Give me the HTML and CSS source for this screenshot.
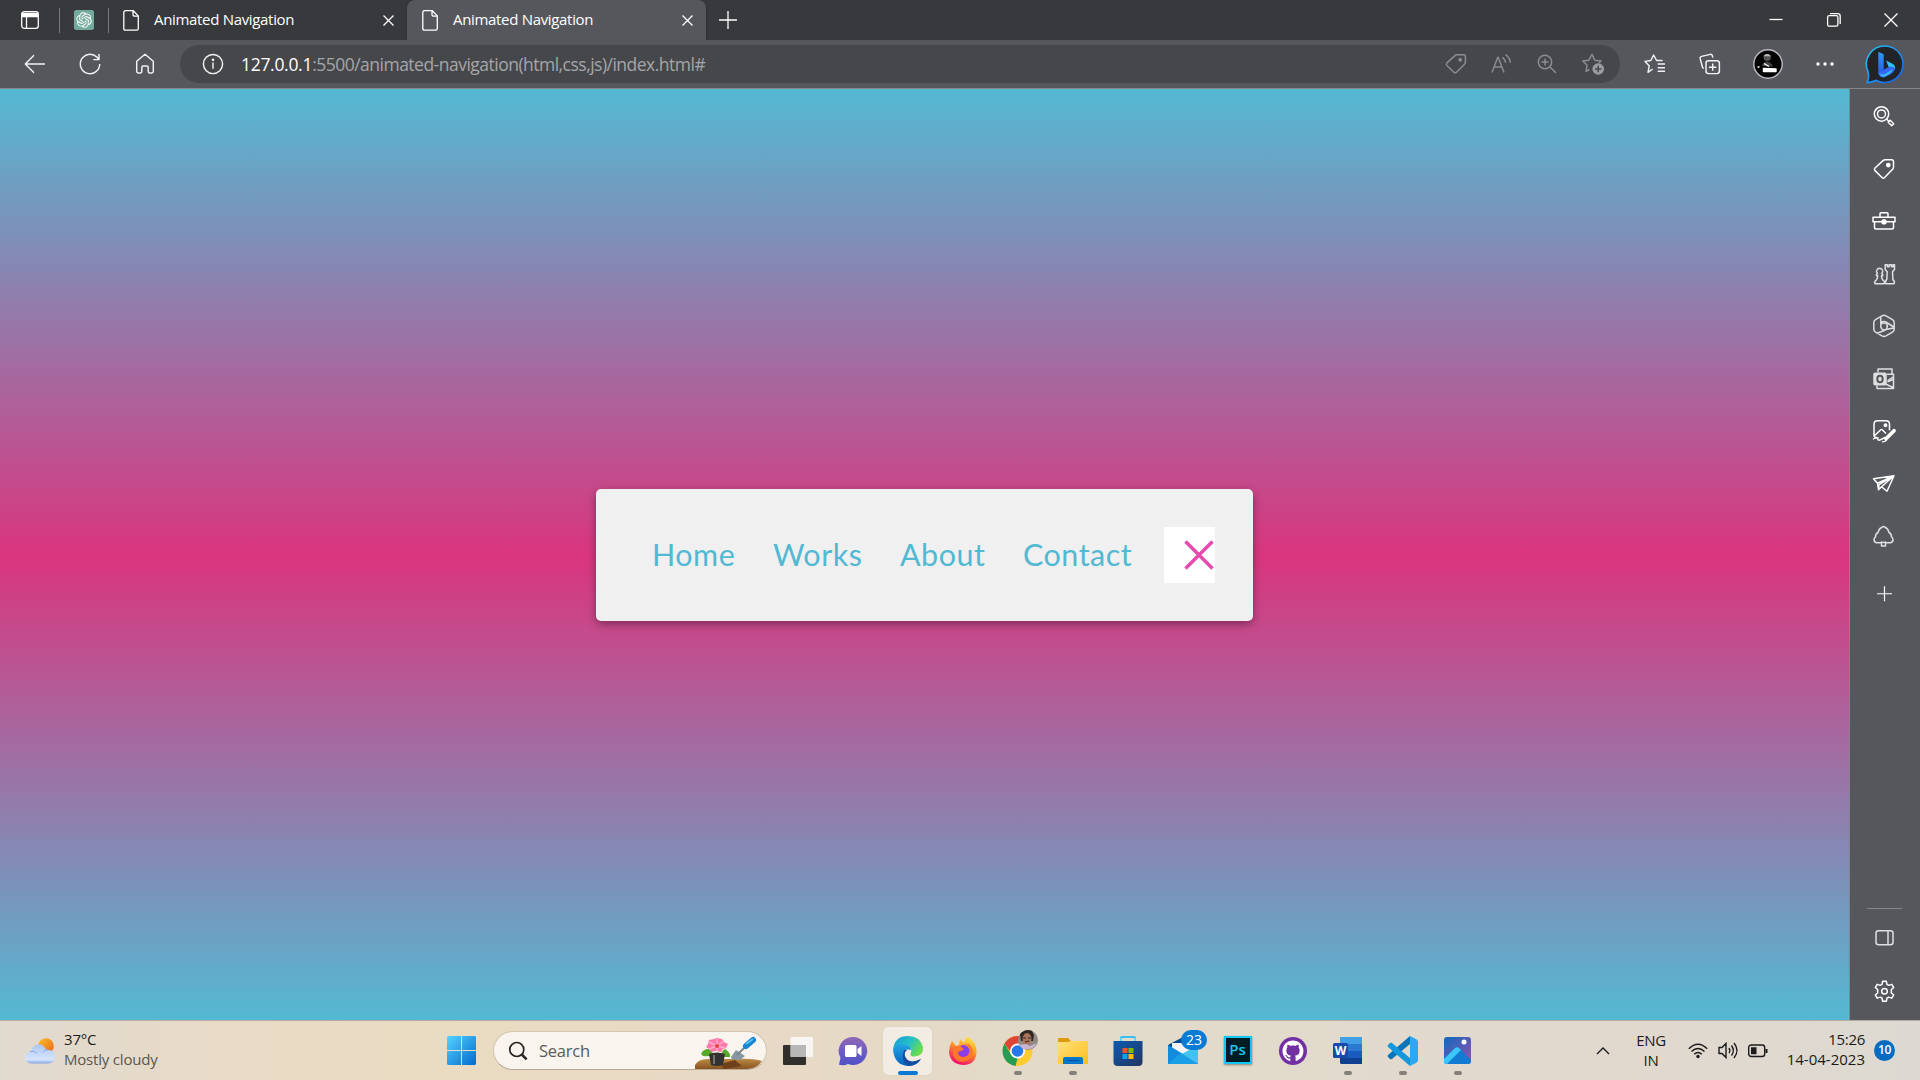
FILE: index.html
```html
<!DOCTYPE html>
<html lang="en">
<head>
<meta charset="utf-8">
<title>Animated Navigation</title>
<link rel="stylesheet" href="styles.css">
</head>
<body>
<div class="desktop">
  <header class="tabbar">
    <div class="tab-actions"><svg width="20" height="20" viewBox="0 0 20 20" fill="none" stroke="#fff" stroke-width="1.3"><rect x="1.7" y="1.7" width="16.6" height="16.6" rx="2.6"/><path d="M2 3.5h16v3H2z" fill="#fff"/><path d="M6.500 6v12"/></svg></div>
    <i class="sep"></i>
    <div class="pinned"><svg class="solid" width="20" height="20" viewBox="0 0 20 20"><rect width="20" height="20" rx="2.5" fill="#74aa9c"/><path transform="translate(2.2 2.2) scale(.65)" fill="#fff" d="M22.2819 9.8211a5.9847 5.9847 0 0 0-.5157-4.9108 6.0462 6.0462 0 0 0-6.5098-2.9A6.0651 6.0651 0 0 0 4.9807 4.1818a5.9847 5.9847 0 0 0-3.9977 2.9 6.0462 6.0462 0 0 0 .7427 7.0966 5.98 5.98 0 0 0 .511 4.9107 6.051 6.051 0 0 0 6.5146 2.9001A5.9847 5.9847 0 0 0 13.2599 24a6.0557 6.0557 0 0 0 5.7718-4.2058 5.9894 5.9894 0 0 0 3.9977-2.9001 6.0557 6.0557 0 0 0-.7475-7.073zm-9.022 12.6081a4.4755 4.4755 0 0 1-2.8764-1.0408l.1419-.0804 4.7783-2.7582a.7948.7948 0 0 0 .3927-.6813v-6.7369l2.02 1.1686a.071.071 0 0 1 .038.052v5.5826a4.504 4.504 0 0 1-4.4945 4.4944zm-9.6607-4.1254a4.4708 4.4708 0 0 1-.5346-3.0137l.142.0852 4.783 2.7582a.7712.7712 0 0 0 .7806 0l5.8428-3.3685v2.3324a.0804.0804 0 0 1-.0332.0615L9.74 19.9502a4.4992 4.4992 0 0 1-6.1408-1.6464zM2.3408 7.8956a4.485 4.485 0 0 1 2.3655-1.9728V11.6a.7664.7664 0 0 0 .3879.6765l5.8144 3.3543-2.0201 1.1685a.0757.0757 0 0 1-.071 0l-4.8303-2.7865A4.504 4.504 0 0 1 2.3408 7.872zm16.5963 3.8558L13.1038 8.364 15.1192 7.2a.0757.0757 0 0 1 .071 0l4.8303 2.7913a4.4944 4.4944 0 0 1-.6765 8.1042v-5.6772a.79.79 0 0 0-.407-.667zm2.0107-3.0231l-.142-.0852-4.7735-2.7818a.7759.7759 0 0 0-.7854 0L9.409 9.2297V6.8974a.0662.0662 0 0 1 .0284-.0615l4.8303-2.7866a4.4992 4.4992 0 0 1 6.6802 4.66zM8.3065 12.863l-2.02-1.1638a.0804.0804 0 0 1-.038-.0567V6.0742a4.4992 4.4992 0 0 1 7.3757-3.4537l-.142.0805L8.704 5.459a.7948.7948 0 0 0-.3927.6813zm1.0976-2.3654l2.602-1.4998 2.6069 1.4998v2.9994l-2.5974 1.4997-2.6067-1.4997Z"/></svg></div>
    <i class="sep"></i>
    <div class="tab first"><svg class="doc" width="16" height="21" viewBox="0 0 16 21"><path d="M2.5.7h7.8l5 5.2v12.6q0 1.7-1.7 1.7H2.5Q.8 20.2.8 18.5v-16Q.8.7 2.5.7zM10 1v3.4q0 1.8 1.8 1.8h3.4"/></svg><span>Animated Navigation</span><svg class="x" width="11" height="11" viewBox="0 0 11 11"><path d="M.5.5l10 10M10.5.5l-10 10"/></svg></div>
    <div class="tab active"><svg class="doc" width="16" height="21" viewBox="0 0 16 21"><path d="M2.5.7h7.8l5 5.2v12.6q0 1.7-1.7 1.7H2.5Q.8 20.2.8 18.5v-16Q.8.7 2.5.7zM10 1v3.4q0 1.8 1.8 1.8h3.4"/></svg><span>Animated Navigation</span><svg class="x" width="11" height="11" viewBox="0 0 11 11"><path d="M.5.5l10 10M10.5.5l-10 10"/></svg></div>
    <svg class="newtab" width="18" height="18" viewBox="0 0 18 18"><path d="M9 0v18M0 9h18"/></svg>
    <div class="window-buttons">
      <svg width="14" height="14" viewBox="0 0 14 14"><path d="M.5 6.500h13"/></svg>
      <svg width="14" height="14" viewBox="0 0 14 14"><rect x=".6" y="2.6" width="10.3" height="10.6" rx="1.6"/><path d="M3 .6h7.6q2.6 0 2.6 2.6V11"/></svg>
      <svg width="14" height="14" viewBox="0 0 14 14"><path d="M.5.5l13 13M13.5.5l-13 13"/></svg>
    </div>
  </header>

  <div class="toolbar">
    <div class="nav-cell"><svg width="22" height="20" viewBox="0 0 22 20"><path d="M21 10H1.5M10 1.2L1.3 10l8.7 8.8"/></svg></div>
    <div class="nav-cell"><svg width="22" height="22" viewBox="0 0 22 22"><path d="M20.7 11A9.7 9.7 0 1 1 17.8 4.1L19.7 6.2M20 1v5.6h-5.7"/></svg></div>
    <div class="nav-cell"><svg width="20" height="21" viewBox="0 0 20 21"><path d="M1.7 8.2L10 1.3l8.3 6.900v10q0 1.700-1.600 1.700h-2.200q-1.300 0-1.300-1.300v-4.300q0-1.400-1.400-1.400H8.200q-1.400 0-1.400 1.400v4.300q0 1.300-1.300 1.300H3.300q-1.600 0-1.600-1.700z"/></svg></div>
    <div class="address">
      <svg class="info" width="22" height="22" viewBox="0 0 22 22"><circle cx="11" cy="11" r="9.600"/><path d="M11 9.500v6.200"/><circle cx="11" cy="6.800" r=".6" fill="#fff"/></svg>
      <p class="url"><b>127.0.0.1</b>:5500/animated-navigation(html,css,js)/index.html#</p>
      <div class="address-icons">
        <svg width="22" height="22" viewBox="0 0 22 22"><path d="M12.2 1.7h6.5q1.7 0 1.7 1.7V9q0 1.3-.9 2.2l-8 8q-1.3 1.3-2.6 0l-7-6.7q-1.2-1.3 0-2.6L10 2.6q1-.9 2.2-.9z"/><circle cx="15.2" cy="6.8" r="1.2" fill="#8c8d90"/></svg>
        <svg width="22" height="22" viewBox="0 0 22 22"><path d="M2 19.500L7.800 4.200h.4L14 19.500M4.200 14h7.600M12.300 4.300q3 1.800 3.300 5.500M15.500 1.700q4.500 3 4.800 8"/></svg>
        <svg width="22" height="22" viewBox="0 0 22 22"><circle cx="9" cy="9" r="6.700"/><path d="M14 14l6 6M9 5.500v7M5.500 9h7"/></svg>
        <svg width="24" height="24" viewBox="0 0 24 24"><path d="M8.500 17.500L5 19.300l1.100-6L1.800 9l6-.8L11 2.400l2.800 5.800 6.300.8-2.100 2.100"/><circle cx="17.200" cy="17" r="5.800" fill="#9b9c9f" stroke="none"/><path d="M14 17h6.400M17.200 13.800v6.400" stroke="#46474b"/></svg>
      </div>
    </div>
    <div class="browser-actions">
      <svg width="22" height="22" viewBox="0 0 22 22"><path d="M8.600 16L4 19.300l1.200-6.500L1 8.400l5.800-.9L9.600 2l3 5.500h6M13.700 11H21M13.700 14.700H21M13.700 18.300H21"/></svg>
      <svg width="22" height="22" viewBox="0 0 22 22"><rect x="7" y="7.800" width="13.400" height="12.800" rx="2.500"/><path d="M13.700 10.600v7.200M10 14.200h7.300M4.800 15.300q-1.200-.1-1.400-1.500L1.200 5.700q-.4-1.900 1.400-2.300l8.600-2q1.600-.3 2.100 1.200l.5 2"/></svg>
      <svg width="30" height="30" viewBox="0 0 30 30"><circle cx="15" cy="15" r="14.200" fill="#030303" stroke="#bbb"/><circle cx="14.200" cy="8.500" r="3.600" fill="#555" stroke="none"/><path d="M10.300 7.200q3.900-4.500 7.800 0z" fill="#bbb" stroke="none"/><path d="M9 17q1-4 5-4.500 4 .5 6 5z" fill="#444" stroke="none"/><path d="M11 14.500l5 3M4.500 18h2M10.500 19.500l12.500.5v2.500H10.500z" fill="#fff" stroke="#fff"/></svg>
      <svg width="20" height="6" viewBox="0 0 20 6"><g fill="#fff" stroke="none"><circle cx="3" cy="3" r="1.700"/><circle cx="10" cy="3" r="1.700"/><circle cx="17" cy="3" r="1.700"/></g></svg>
      <svg width="40" height="40" viewBox="0 0 40 40"><defs><linearGradient id="bingRing" x1="0" y1="0" x2="1" y2="1"><stop offset="0" stop-color="#22c7f4"/><stop offset="1" stop-color="#155be9"/></linearGradient><linearGradient id="bingB" x1="0" y1="0" x2="0" y2="1"><stop stop-color="#2d9df6"/><stop offset="1" stop-color="#2458e8"/></linearGradient></defs><path d="M20 2a18.200 18.200 0 1 1-8.500 34.400Q6 38.700 2 38.600q2.400-5 1-10.900A18.200 18.200 0 0 1 20 2z" fill="#222327" stroke="url(#bingRing)" stroke-width="1.700"/><path d="M13.300 7.800l5.400 2.400v15.500l-5.400 4.800z" fill="url(#bingB)" stroke="none"/><path d="M21 16.500l6.500 3.200q4 2.500 1.700 6.500l-5.500-3.200z" fill="#30c1f4" stroke="none"/><path d="M13.300 29l5.400-3.300 5-2.700q5-1 6 1.500-.5 4-5.500 6.500l-5 2.500q-4.500.500-5.900-4.500z" fill="#3268f3" stroke="none"/><path d="M14 30l5 .5 9-5.500q-1 3.500-4.500 5.500l-4.500 2.500q-3 0-5-3z" fill="#38b6f5" stroke="none"/></svg>
    </div>
  </div>

  <div class="workspace">
    <main class="page">
      <nav class="card">
        <ul>
          <li class="home">Home</li><li class="works">Works</li><li class="about">About</li><li class="contact">Contact</li>
        </ul>
        <button class="toggle" aria-label="Toggle menu"><svg width="32" height="32" viewBox="0 0 32 32"><path d="M2.500 2.500l27 27M29.500 2.500l-27 27"/></svg></button>
      </nav>
    </main>
    <aside class="sidebar">
      <svg width="24" height="24" viewBox="0 0 24 24"><circle cx="9.500" cy="9.700" r="7.200"/><circle cx="9.500" cy="9.700" r="4"/><path d="M14.500 14.700l2.500 2.500M16.200 18l2-2 3.500 3.500-2 2z"/></svg>
      <svg width="24" height="24" viewBox="0 0 24 24"><path d="M13.300 2.500h6.400q1.800 0 1.800 1.800v5.500q0 1.300-.9 2.200l-8 8.300q-1.300 1.300-2.600 0l-7-6.900q-1.200-1.300 0-2.600l8-7.400q1-.9 2.300-.9z"/><circle cx="16.300" cy="7.800" r="1.600" fill="#fff"/></svg>
      <svg width="24" height="24" viewBox="0 0 24 24"><path d="M1 8h22v4.500H1zM2.500 12.500v6q0 1.200 1.200 1.200h16.600q1.200 0 1.200-1.200v-6M8 7.500V4.600q0-1 1-1h6q1 0 1 1v2.900"/><rect x="10.200" y="10.800" width="3.600" height="3.800" rx="1" fill="#fff"/></svg>
      <svg class="dim" width="24" height="24" viewBox="0 0 24 24"><path d="M3 21.500q-1.200-2.300 1.700-4.200 1-1.400 1-3.700H4.500v-1.500l1-.8Q3.800 9.600 4.700 8q1-1.900 2.900-1.900t2.900 1.900q.9 1.600-.8 3.300l1 .8v1.500H9.500q0 2.300 1 3.700 2.900 1.900 1.700 4.200zM13.800 21.500q-1-2.400 1-4.200l.4-7.800-2-2.200V2.600h2.200v2h1.700v-2h2.300v2H21v-2h1.500v4.700l-2 2.200.4 7.800q2.200 1.800 1.200 4.200z"/></svg>
      <svg class="dim" width="24" height="24" viewBox="0 0 24 24"><path d="M10 1.600q2-1.200 4 0l6.500 3.800q1.700 1.100 1.700 3v6.500q0 2-1.700 3L14 21.700q-2 1.100-4 0l-6.500-3.800q-1.700-1-1.700-3V8.400q0-2 1.700-3zM8.800 3v9.300q.3 3 3 3.500l9.700-2M9 8.500q2.500-2 5.300-.5l7 4.500M15.200 10.500q.7 3.500-2.200 5.500l-8 3"/><path d="M9 9.500q4-2 6.300 1"/></svg>
      <svg class="dim" width="24" height="24" viewBox="0 0 24 24"><path d="M6 5V1.800h14v6M15 7h6.500v14.200H5v-3M15.500 13.500l6-4M13 16.500l8.500 4M21.500 12l-6 2.500"/><rect x="2" y="6" width="12" height="11.500" rx="1" fill="#dedfe0"/><ellipse cx="8" cy="11.700" rx="2.700" ry="3.200" stroke="#54565b" stroke-width="2"/></svg>
      <svg width="26" height="26" viewBox="0 0 26 26"><path d="M6 19.500q-3 0-3-3V6q0-3.500 3.500-3.500H15q3.500 0 3.500 3.500v6M4 17l5.500-5.300q1-.8 2 0l3.500 3.500"/><circle cx="14.500" cy="7" r="1.200" fill="#fff"/><path d="M23 12.500l-8 8" stroke-width="3.800" stroke-linecap="round"/><path d="M2 21q3-2 5-1.200-1 3 2.500 1.700l3-1.500q2-1.500 3 .5.300 3-4.500 3"/></svg>
      <svg width="24" height="24" viewBox="0 0 24 24"><path d="M1.500 6.500l20.500-3-7 15.500-5.500-4.500-3 3-1-6.500zM5.500 11L22 3.500 9.500 14.500M6.500 17.500L7 12.300 22 3.500"/></svg>
      <svg class="dim" width="24" height="24" viewBox="0 0 24 24"><path d="M9.500 18.500H5q-3-.2-3-3 0-1.700 1.500-2.800Q3.400 9.500 6.200 8q.5-3.600 3.500-4.700Q11.500 1 13.300 3.300q3 1.100 3.500 4.700 2.800 1.500 2.700 4.700Q21 13.800 21 15.500q0 2.800-3 3h-4.500M9.500 17.700v4h4v-4q-2 1.300-4 0z"/></svg>
      <svg class="add" width="24" height="24" viewBox="0 0 24 24"><path d="M12.500 5v15M5 12.500h15"/></svg>
      <hr>
      <svg class="panel dim" width="24" height="24" viewBox="0 0 24 24"><rect x="4" y="4.500" width="17" height="14" rx="2.500"/><path d="M16 4.500v14"/></svg>
      <svg width="24" height="24" viewBox="0 0 24 24"><circle cx="12.500" cy="12" r="2.800"/><path transform="translate(.5 0)" d="M10.200 2h3.600l.7 3.200q1 .3 1.700.9l3.100-1 1.900 3.200-2.500 2.200q.4 1.500 0 3l2.500 2.200-1.900 3.200-3.100-1q-.7.6-1.700.9l-.7 3.200h-3.600l-.7-3.200q-1-.3-1.700-.9l-3.100 1-1.900-3.200 2.500-2.200q-.4-1.500 0-3L2.800 8.300l1.900-3.200 3.100 1q.7-.6 1.700-.9z"/></svg>
    </aside>
  </div>

  <footer class="taskbar">
    <div class="weather">
      <svg width="30" height="26" viewBox="0 0 30 26"><defs><linearGradient id="sun" x1="0" y1="0" x2="1" y2="1"><stop stop-color="#f8bf29"/><stop offset="1" stop-color="#ee6418"/></linearGradient><linearGradient id="cloud" x1="0" y1="0" x2="0" y2="1"><stop stop-color="#aac6f5"/><stop offset=".8" stop-color="#d7e5fb"/><stop offset="1" stop-color="#86a6e5"/></linearGradient></defs><circle cx="21" cy="8" r="7.800" fill="url(#sun)"/><path d="M6 25.500a6 6 0 0 1 0-12Q8 6.500 14 6.500q5 0 7 5.200 8-.7 9 6.300-.3 7.500-7 7.500z" fill="url(#cloud)"/><path d="M5 13.500q5-1 7 2M18 14.500q1-3 5-2.800" fill="none" stroke="#8ba9e6"/></svg>
      <p><span>37°C</span><br><span class="sky">Mostly cloudy</span></p>
    </div>
    <div class="dock">
      <div class="app start"><svg width="29" height="29" viewBox="0 0 29 29"><defs><linearGradient id="win" x1="0" y1="0" x2="1" y2="1"><stop stop-color="#55d4ff"/><stop offset="1" stop-color="#0069cf"/></linearGradient></defs><path d="M1 0h13v14H0V1zM15 0h13l1 1v13H15zM0 15h14v14H1l-1-1zM15 15h14v13l-1 1H15z" fill="url(#win)"/></svg></div>
      <div class="search">
        <svg width="20" height="20" viewBox="0 0 20 20" fill="none" stroke="#252525"><circle cx="8.800" cy="8.500" r="7" stroke-width="1.700"/><path d="M13.800 13.500l4.800 4.800" stroke-width="2.500"/></svg>
        <span>Search</span>
        <svg class="art" width="68" height="32" viewBox="0 0 68 32"><defs><linearGradient id="soil" x1="0" y1="0" x2="0" y2="1"><stop stop-color="#bd8b46"/><stop offset="1" stop-color="#875321"/></linearGradient></defs><path d="M0 32v-4q3-6 13-6h28q16-1 26 2-4 6-11 8z" fill="url(#soil)"/><path d="M26 27l14-4 7 6-18 3z" fill="#6f411b"/><path d="M14 19q-10 1-7-4 4-5 9-2l4 7zM26 20q0-6 4-8 6 4 5 8z" fill="#56aa28"/><path d="M14 17q8-3 16 0l-2 11q-6 2-12 0z" fill="#343332"/><path d="M19 18v9" stroke="#77736f" stroke-width="2"/><path d="M22 1l5 1 2 3 4 2-2 4-3 1-2 3-5-1-5 1-2-3-3-2 2-3 1-4 5-1z" fill="#ff79aa"/><path d="M14 5l8 4 7-5M14 12l8-3 8 2M22 2v12" stroke="#ffacd0" stroke-width="1.500" fill="none"/><circle cx="22" cy="9" r="2" fill="#e8423c"/><path d="M36 20l5-7 9 6-5 4-8-.500z" fill="#8798a4"/><path d="M42 18l8-8" stroke="#78858d" stroke-width="2"/><path d="M51 9l7-6" stroke="#1686d2" stroke-width="6" stroke-linecap="round"/><path d="M51 7l7-5" stroke="#56c0f4" stroke-width="2"/></svg>
      </div>
      <div class="app"><svg width="30" height="28" viewBox="0 0 30 28"><rect y="8" width="23" height="20" rx="1" fill="#302f2c"/><rect x="7.500" width="22.500" height="20" rx="1" fill="#fafafa" opacity=".86"/><path d="M7.500 8H23v12H7.500z" fill="#aaa" opacity=".75"/></svg></div>
      <div class="app"><svg width="30" height="30" viewBox="0 0 30 30"><defs><linearGradient id="chat" x1="0" y1="0" x2="0" y2="1"><stop stop-color="#8f69b8"/><stop offset="1" stop-color="#4e50c8"/></linearGradient></defs><path d="M15 1a14 14 0 1 1-5 27q-4 2-9 .8l1.500-7A14 14 0 0 1 15 1z" fill="url(#chat)"/><rect x="7" y="9" width="11.500" height="12" rx="1.500" fill="#fff"/><path d="M19.500 13l4-3v10l-4-3z" fill="#fff"/></svg></div>
      <div class="app current"><svg width="30" height="30" viewBox="0 0 30 30"><defs><linearGradient id="edgeTop" x1="0" y1="0" x2="1" y2=".5"><stop stop-color="#169ad7"/><stop offset=".55" stop-color="#24bfc6"/><stop offset="1" stop-color="#69dc50"/></linearGradient><linearGradient id="edgeLow" x1="0" y1="0" x2="0" y2="1"><stop stop-color="#23a8e4"/><stop offset="1" stop-color="#075fbd"/></linearGradient></defs><path d="M0 13Q2 0 15 0q12 0 15 11 1 9-9 9.500-5-.3-3-3.500 2-6-6-8Q5 8 0 13z" fill="url(#edgeTop)"/><path d="M0 13Q4 7 10 8q8 1 8 6-6-2-7 4 0 7 9 8 4 0 7.800-3Q24 30 15 30 1 29 0 13z" fill="url(#edgeLow)"/><path d="M11 14q-4 11 4 16 9 0 13-7-13 6-16-3-1-4 2-6z" fill="#144da2"/></svg></div>
      <div class="app"><svg width="30" height="30" viewBox="0 0 30 30"><defs><linearGradient id="fox" x1=".8" y1="0" x2=".4" y2="1"><stop stop-color="#fff04a"/><stop offset=".45" stop-color="#ff9825"/><stop offset="1" stop-color="#f10b6c"/></linearGradient></defs><path d="M4 5l4 5 3-1 1-6 4 4 3-7q9 6 9.500 14Q29 29 15 29 2 28 1 16q0-6 3-11z" fill="url(#fox)"/><circle cx="15.500" cy="15" r="6" fill="#8b3ee7"/><path d="M5 11l7-1 4 3-3 2-3 1q0 6 6 5 6-1 6-7-2-6-7-6 8-2 10 7-1 11-11 11-7-1-9-7z" fill="#ff792c"/></svg></div>
      <div class="app running"><svg class="chrome" width="37" height="37" viewBox="0 0 37 37"><circle cx="15.500" cy="22" r="15" fill="#ffcb31"/><path d="M2.500 14.500A15 15 0 0 1 28.500 14.500H15.500L10 25z" fill="#df4537"/><path d="M2.500 14.500L9 25.500l6.500 4-2 7.400A15 15 0 0 1 2.500 14.500z" fill="#259b54"/><circle cx="15.500" cy="22" r="7.500" fill="#fff"/><circle cx="15.500" cy="22" r="5.800" fill="#2877e8"/><circle cx="26" cy="11" r="10" fill="#8f8a84"/><path d="M18 5q6-6 12-3l2 4-1 6H19z" fill="#302722"/><ellipse cx="25" cy="10" rx="4.500" ry="6" fill="#a9745b"/><path d="M17 16l7-1 4 2 7-3q-5 9-15 5z" fill="#c9b4d2"/><path d="M21 9h3M26 9h3M23 13l4-1" stroke="#322522"/></svg></div>
      <div class="app running"><svg width="30" height="27" viewBox="0 0 30 27"><defs><linearGradient id="folder" x1="0" y1="0" x2="1" y2="1"><stop stop-color="#ffe079"/><stop offset="1" stop-color="#ffbf20"/></linearGradient></defs><path d="M0 6V2q0-1 1-1h9l3 3h15q2 0 2 2z" fill="#dd9b0c"/><path d="M0 5h10l3-1h17v23H0z" fill="url(#folder)"/><path d="M5 27v-5q0-2 2-2h16q2 0 2 2v5z" fill="#0876cc"/><path d="M9 23.500h12" stroke="#034fa0"/></svg></div>
      <div class="app"><svg width="30" height="30" viewBox="0 0 30 30"><defs><linearGradient id="store" x1="0" y1="0" x2="1" y2="1"><stop stop-color="#0b5cb2"/><stop offset="1" stop-color="#243561"/></linearGradient></defs><path d="M8 9V2q0-1 1-1h12q1 0 1 1v7" fill="none" stroke="#38bef0" stroke-width="2"/><path d="M.5 5h29v21q0 4-4 4h-21q-4 0-4-4z" fill="url(#store)"/><path d="M9.500 12H14.500v5h-5z" fill="#f35325"/><path d="M15.500 12h5v5h-5z" fill="#81bc06"/><path d="M9.500 18h5v5h-5z" fill="#05a6f0"/><path d="M15.500 18h5v5h-5z" fill="#ffba08"/><path d="M8 5V2M22 5V2" stroke="#58d7ff" stroke-width="2"/></svg></div>
      <div class="app mail"><svg width="30" height="27" viewBox="0 0 30 27"><path d="M0 8L15 0l15 8v19H0z" fill="#084d94"/><path d="M4 6h22v13H4z" fill="#f4f5f6"/><path d="M0 8l30 18v1H0z" fill="#128cdd"/><path d="M30 8L13 17.500 30 27z" fill="#41c2ef"/><path d="M0 27h30L13 16z" fill="#1a9fe5"/></svg><span class="count">23</span></div>
      <div class="app"><div class="ps">Ps</div></div>
      <div class="app"><svg width="30" height="30" viewBox="0 0 30 30"><circle cx="15" cy="15" r="14" fill="#7330a2"/><path transform="translate(4.500 4.500) scale(1.310)" fill="#fff" d="M8 0C3.580 0 0 3.580 0 8c0 3.540 2.290 6.530 5.470 7.590.4.07.55-.17.55-.38 0-.19-.01-.82-.01-1.490-2.010.37-2.530-.49-2.690-.94-.09-.23-.48-.94-.82-1.130-.28-.15-.68-.52-.01-.53.63-.01 1.080.58 1.230.82.72 1.210 1.870.87 2.330.66.07-.52.28-.87.51-1.070-1.780-.2-3.640-.89-3.640-3.950 0-.87.31-1.590.82-2.150-.08-.2-.36-1.020.08-2.120 0 0 .67-.21 2.200.82.64-.18 1.320-.27 2-.27s1.360.09 2 .27c1.530-1.040 2.200-.82 2.200-.82.44 1.100.16 1.920.08 2.120.51.56.82 1.270.82 2.150 0 3.070-1.870 3.750-3.650 3.950.29.25.54.73.54 1.480 0 1.070-.01 1.930-.01 2.200 0 .21.15.46.55.38A8.010 8.010 0 0 0 16 8c0-4.420-3.580-8-8-8z"/></svg></div>
      <div class="app running word"><svg width="30" height="29" viewBox="0 0 30 29"><path d="M7 1h22v7H7z" fill="#419fe5"/><path d="M7 8h22v7H7z" fill="#2c79d2"/><path d="M7 15h22v7H7z" fill="#185abd"/><path d="M7 22h22v6H8l-1-1z" fill="#103f91"/><rect y="7" width="15" height="15" rx="1.500" fill="#164aaa"/></svg><b>W</b></div>
      <div class="app running"><svg width="30" height="30" viewBox="0 0 30 30"><path d="M22 0v8L4 23q-1 .7-2 0l-2-2q-.8-1 0-2z" fill="#0875b9"/><path d="M0 9l2-2q1-1 2 0l18 15v8L0 11q-.8-1 0-2z" fill="#1597dc"/><path d="M22 0l6 3q2 1 2 3v18q0 2-2 3l-6 3V0z" fill="#2ba9f2"/></svg></div>
      <div class="app running"><svg width="27" height="27" viewBox="0 0 27 27"><defs><linearGradient id="photo" x1="0" y1="0" x2="1" y2="1"><stop stop-color="#1168bd"/><stop offset="1" stop-color="#9652ad"/></linearGradient></defs><rect width="27" height="27" rx="3" fill="url(#photo)"/><path d="M0 22l11-11q2-1.500 4 0l12 12v1q0 3-3 3H3q-3 0-3-3z" fill="#117bd1"/><path d="M0 22l11-11q2-1.500 4 0l2 2L3 27q-3 0-3-3z" fill="#3cc6f8"/><circle cx="20" cy="5" r="2.500" fill="#fff"/></svg></div>
    </div>
    <div class="tray">
      <svg class="chevron" width="14" height="8" viewBox="0 0 14 8"><path d="M1 7l6-6 6 6"/></svg>
      <p class="lang">ENG<br>IN</p>
      <div class="status">
        <svg width="20" height="16" viewBox="0 0 20 16"><path d="M.8 5.800q9.200-9.200 18.400 0M3.500 8.500q6.500-6.200 13 0M6.200 11.200q3.800-3.600 7.600 0"/><circle cx="10" cy="13.500" r="1.700" fill="#1b1b1b" stroke="none"/></svg>
        <svg width="20" height="17" viewBox="0 0 20 17"><path d="M1 5.500h3l4-4v14l-4-4H1zM11 6q1.700 2.500 0 5M13.500 3.500q3.700 5 0 10M16 1q6 7.500 0 15"/></svg>
        <svg width="20" height="14" viewBox="0 0 20 14"><rect x=".7" y="1" width="16" height="11.500" rx="2.500"/><path d="M3 3.300h5.500v7H3zM17.500 5h2v4h-2z" fill="#1b1b1b" stroke="none"/></svg>
      </div>
      <p class="clock"><span class="time">15:26</span><br>14-04-2023</p>
      <span class="notice">10</span>
    </div>
  </footer>
</div>
</body>
</html>
```
FILE: styles.css
```css
* { box-sizing: border-box; }
body { margin: 0; overflow: hidden; font-family: "Open Sans", "Noto Sans", sans-serif; }
p, ul { margin: 0; padding: 0; list-style: none; }
svg { display: block; flex: none; overflow: visible; }
.desktop { display: flex; flex-direction: column; width: 1920px; height: 1080px; }

.tabbar { display: flex; align-items: center; height: 40px; flex: none; background: #38393d; color: #fff; }
.tabbar > svg, .tabbar .x, .tabbar .doc, .window-buttons svg { fill: none; stroke: #fff; stroke-width: 1.3; }
.tab-actions { width: 59px; padding-left: 20px; }
.sep { width: 1px; height: 25px; background: #77787b; }
.pinned { width: 48px; padding-left: 14px; }
.tab { display: flex; align-items: center; height: 40px; font-size: 15px; letter-spacing: -.32px; }
.tab span { margin-left: 15px; padding-bottom: 2px; white-space: nowrap; }
.tab .x { margin-left: auto; }
.tab.first { width: 298px; padding: 0 13px 0 14px; }
.tab.active { width: 299px; padding: 0 13px 0 15px; background: #56575c; border-radius: 8px 8px 0 0; box-shadow: 0 0 3px #2a2b2e; clip-path: inset(0 -3px 0 -3px); }
.newtab { margin-left: 13px; }
.window-buttons { display: flex; gap: 43.5px; margin-left: auto; padding-right: 22px; }

.toolbar { display: flex; align-items: center; height: 49px; flex: none; padding-left: 7px; background: #56575c; border-bottom: 1px solid #85868a; }
.toolbar svg { fill: none; stroke: #f2f2f3; stroke-width: 1.45; stroke-linejoin: round; }
.nav-cell { display: flex; justify-content: center; width: 55px; padding-bottom: 1px; }
.address { display: flex; align-items: center; width: 1440px; height: 38px; margin-left: 8px; padding-left: 22px; border-radius: 19px; background: #46474b; }
.url { margin-left: 17px; padding-bottom: 1px; color: #a5a6a9; font-size: 17.5px; letter-spacing: -.51px; white-space: nowrap; }
.url b { color: #fff; font-weight: 400; letter-spacing: -.3px; }
.address-icons { display: flex; align-items: center; gap: 23.5px; margin-left: auto; padding-right: 15px; }
.address-icons svg { stroke: #8c8d90; }
.browser-actions { display: flex; align-items: center; width: 300px; padding-left: 24px; }
.browser-actions svg:nth-child(2) { margin-left: 33px; }
.browser-actions svg:nth-child(3) { margin-left: 32px; }
.browser-actions svg:nth-child(4) { margin-left: 32px; }
.browser-actions svg:nth-child(5) { margin-left: 30px; }

.workspace { display: flex; height: 931px; }
.page { display: flex; align-items: center; justify-content: center; width: 1849px; background: linear-gradient(#54b9d3, #da357e 50.2%, #54b9d3); }
.card { display: flex; align-items: center; width: 657px; height: 132px; padding-left: 56px; border-radius: 5px; background: #f0f0f0; box-shadow: 0 3px 8px rgba(0,0,0,.38); }
.card ul { display: flex; width: 512px; padding-bottom: 1px; color: #52b9d3; font: 30.5px/40px Lato, sans-serif; letter-spacing: .5px; }
.home { width: 121px; }
.works { width: 127px; }
.about { width: 123px; }
.toggle { display: flex; align-items: center; justify-content: flex-end; width: 51px; height: 56px; padding: 0; border: 0; background: #fff; }
.toggle svg { fill: none; stroke: #e54bac; stroke-width: 3.5; }

.sidebar { display: flex; flex-direction: column; align-items: center; width: 71px; padding: 1px 2px 3px 0; background: #56575c; border-left: 1px solid #85868a; }
.sidebar svg { height: 52.5px; fill: none; stroke: #fff; stroke-width: 1.5; stroke-linejoin: round; }
.sidebar .dim { stroke: #dedfe0; }
.sidebar .add { margin-top: 4px; stroke-width: 1.2; }
.sidebar hr { width: 35px; height: 1px; margin: auto 0 3px; border: 0; background: #85868a; }

.taskbar { display: flex; align-items: center; height: 60px; flex: none; border-top: 1px solid #b4aca3; background: linear-gradient(90deg, #e1dacf, #e9dac5 14%, #e9dcc2 23%, #e7d9c5 40%, #e2daca 60%, #e1d9ce 85%, #ddd9d2); color: #1b1b1b; }
.weather { display: flex; align-items: center; width: 433px; padding-left: 25px; font-size: 15px; line-height: 20px; letter-spacing: -.2px; }
.weather p { margin-left: 9px; padding-bottom: 4px; }
.sky { color: #5a5650; }
.dock { display: flex; align-items: center; }
.app { position: relative; display: flex; align-items: center; justify-content: center; width: 49px; height: 48px; margin: 0 3px; border-radius: 5px; }
.start { margin: 0 7px 0 4px; }
.search { display: flex; align-items: center; width: 274px; height: 39px; margin-right: 3px; padding-left: 14px; overflow: hidden; border: 1px solid #d2c5b2; border-bottom-color: #b7aa97; border-radius: 20px; background: #f9f4ed; font-size: 16.5px; color: #5b5a58; letter-spacing: -.25px; }
.search span { margin-left: 11px; }
.search .art { margin-left: auto; margin-right: 3px; align-self: flex-end; }
.current { background: #f3ece2; box-shadow: 0 0 1px #c7bbaa; }
.current::after, .running::after { content: ""; position: absolute; bottom: 0; width: 20px; height: 4px; border-radius: 2px; background: #087ad5; }
.running::after { width: 8px; background: #85807a; }
.chrome { transform: translate(3px, -3px); }
.count { position: absolute; left: 23px; top: 3px; width: 26px; height: 20px; border-radius: 10px; background: #087bd4; color: #fff; font-size: 14px; line-height: 19px; text-align: center; }
.ps { width: 28px; height: 28px; border: 2px solid #15c7f5; background: #001d26; color: #15c7f5; font-size: 15px; font-weight: 600; line-height: 23px; text-align: center; box-shadow: 0 1px 2px #0006; transform: translateY(-1px); }
.word b { position: absolute; left: 10px; top: 14px; width: 15px; color: #fff; font-size: 12px; line-height: 19px; text-align: center; }
.tray { display: flex; align-items: center; margin-left: auto; padding-right: 25px; font-size: 15px; line-height: 20px; letter-spacing: -.3px; }
.tray svg { fill: none; stroke: #1b1b1b; stroke-width: 1.4; }
.lang { width: 50px; margin-left: 16px; padding-bottom: 2px; text-align: center; }
.status { display: flex; align-items: center; gap: 10px; margin-left: 12px; }
.clock { width: 97px; padding-bottom: 4px; text-align: right; letter-spacing: 0; white-space: nowrap; }
.notice { width: 21px; height: 21px; margin-left: 9px; border-radius: 50%; background: #066cc2; color: #fff; font-size: 12px; font-weight: 600; line-height: 20px; text-align: center; }
.time { letter-spacing: -.3px; }
```
